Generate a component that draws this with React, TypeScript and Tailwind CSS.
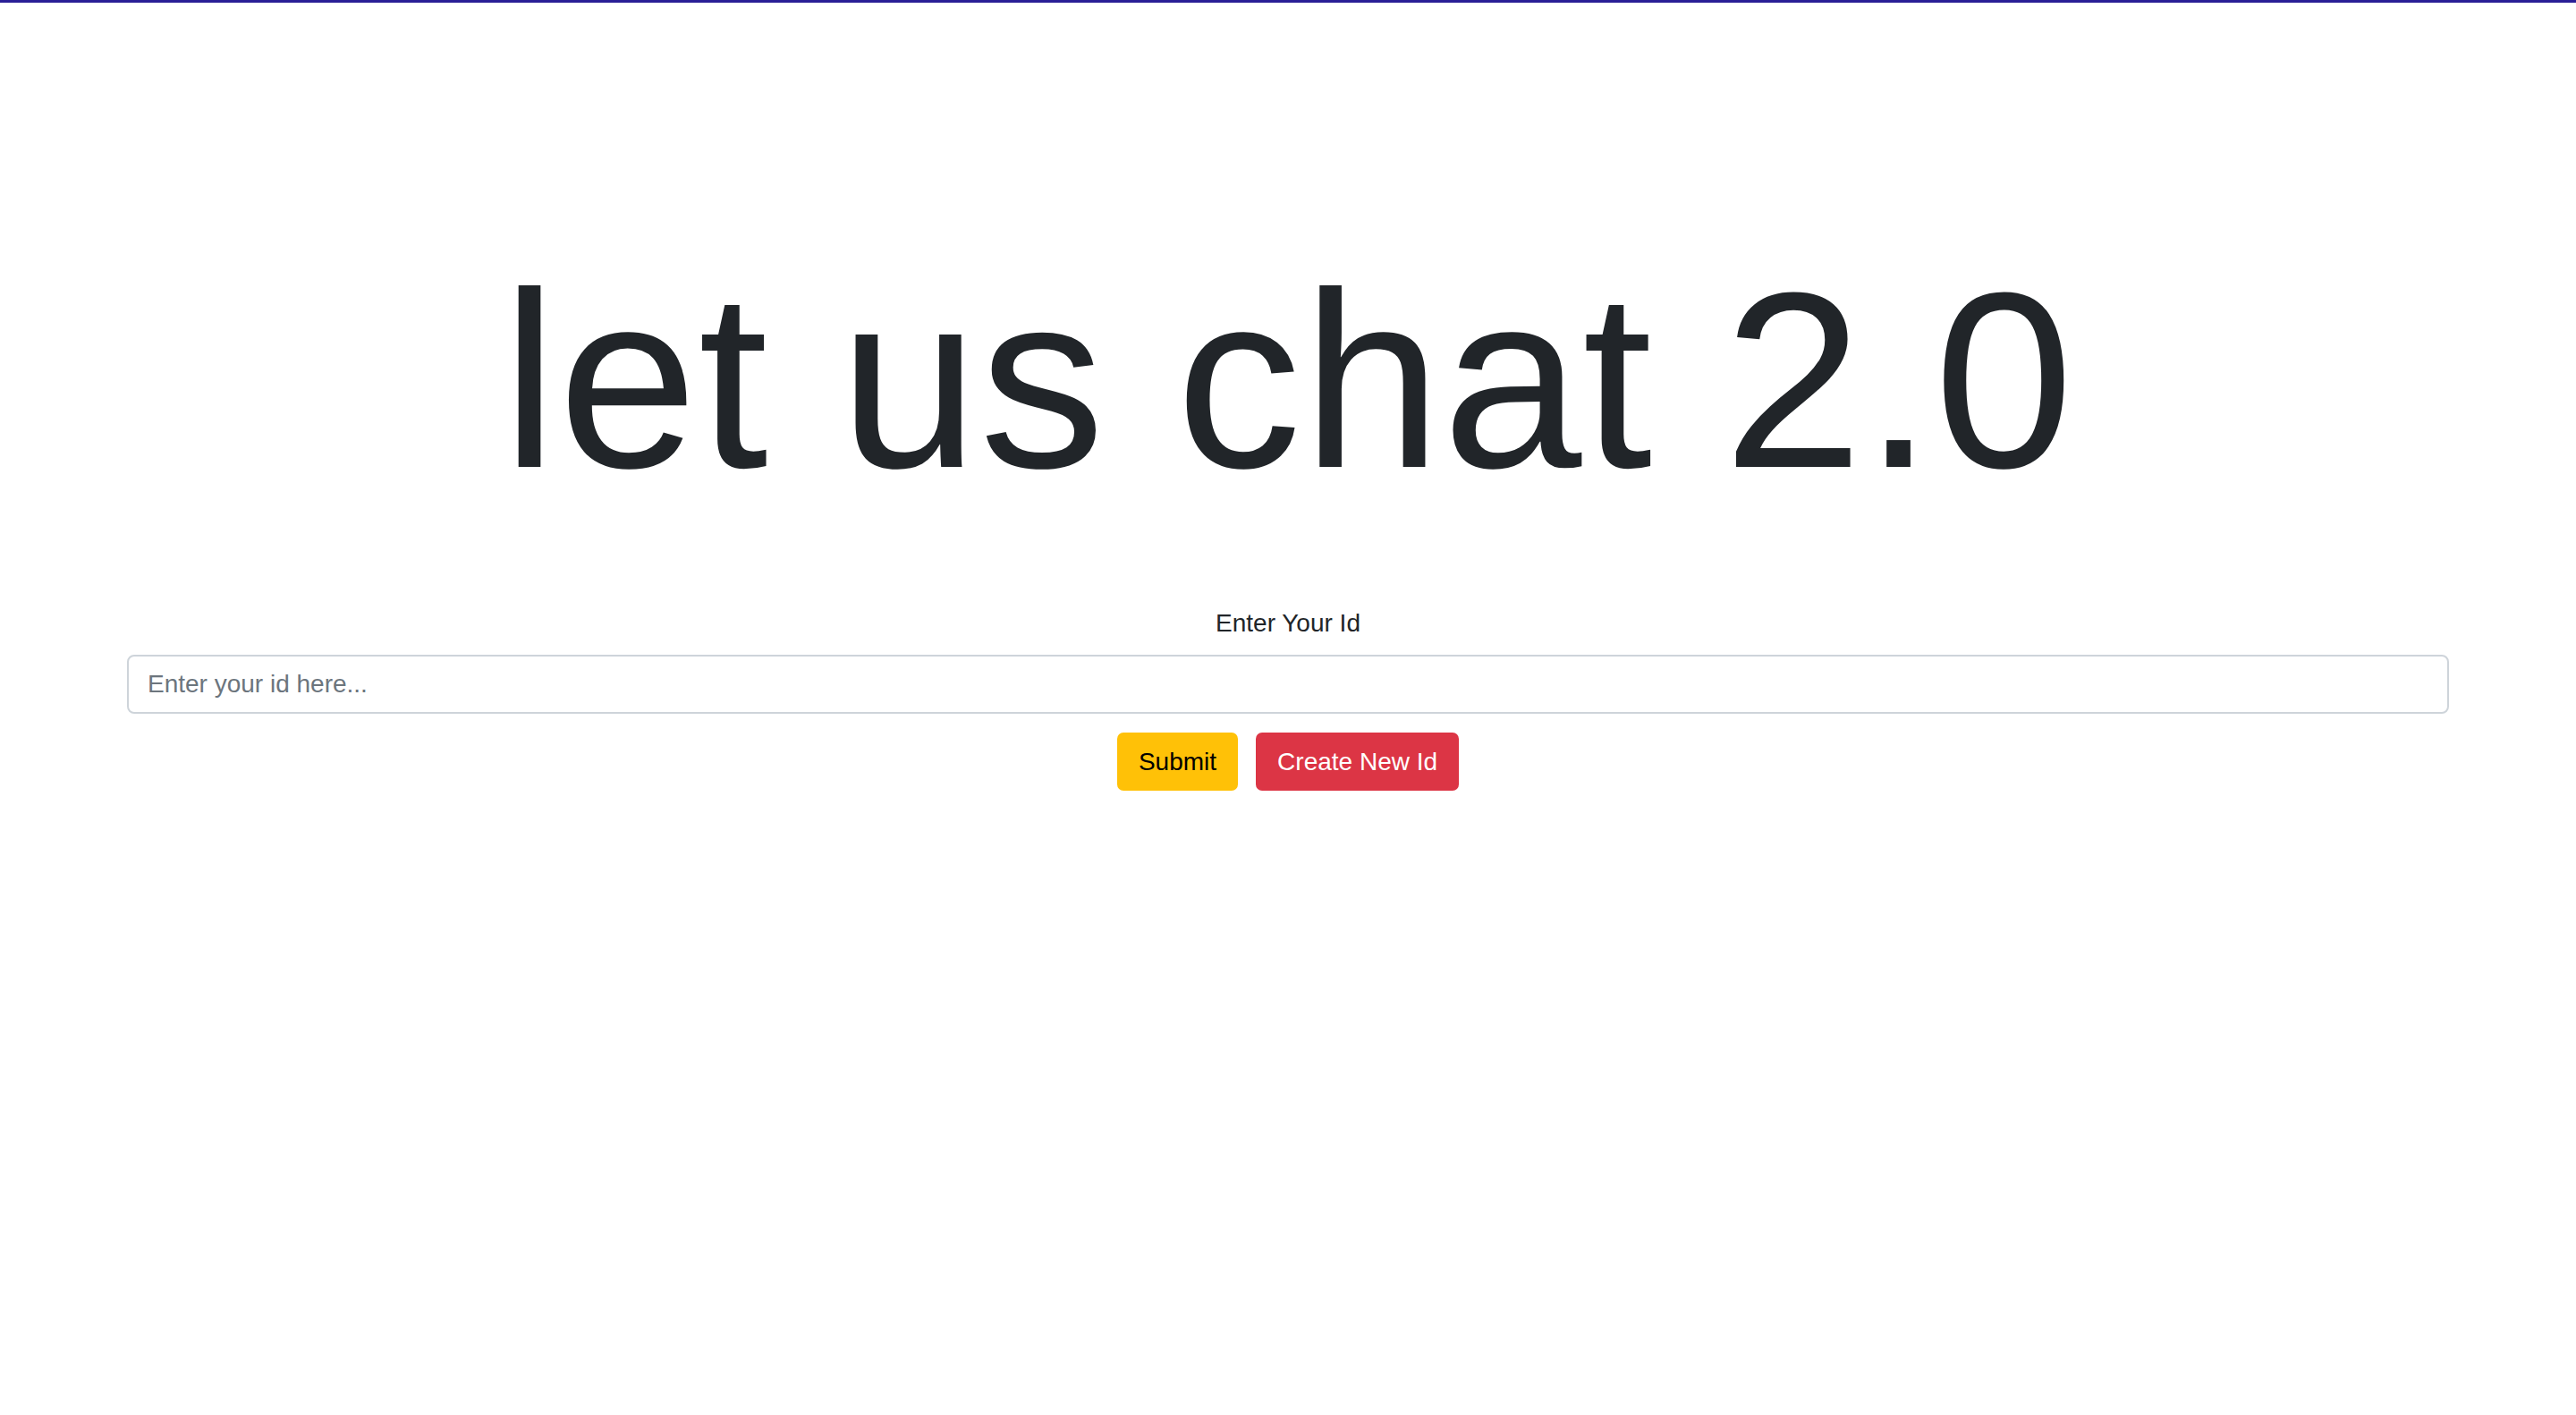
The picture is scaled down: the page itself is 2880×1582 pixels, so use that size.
export default function App() {
    return (
        <div className="min-h-screen bg-white text-[#212529] font-['Liberation_Sans',Arial,sans-serif]">
            <div className="h-[3px] bg-[#2a1f96]" />
            <div className="mx-[142px] pt-[254px]">
                <h1 className="text-center text-[280px] leading-[1.2] font-normal tracking-[1px]">let us chat 2.0</h1>

                <div className="mt-[83px] flex flex-col items-center">
                    <label htmlFor="userId" className="text-[28px] leading-[42px] mb-[14px]">
                        Enter Your Id
                    </label>
                    <input
                        id="userId"
                        type="text"
                        placeholder="Enter your id here..."
                        className="w-full h-[66px] px-[21px] text-[28px] border-2 border-[#ced4da] rounded-[8px] outline-none placeholder:text-[#6c757d]"
                    />
                    <div className="mt-[21px] flex gap-[20px]">
                        <button className="h-[65px] px-[24px] text-[28px] rounded-[7px] bg-[#ffc107] text-black">Submit</button>
                        <button className="h-[65px] px-[24px] text-[28px] rounded-[7px] bg-[#dc3545] text-white">Create New Id</button>
                    </div>
                </div>
            </div>
        </div>
    );
}
